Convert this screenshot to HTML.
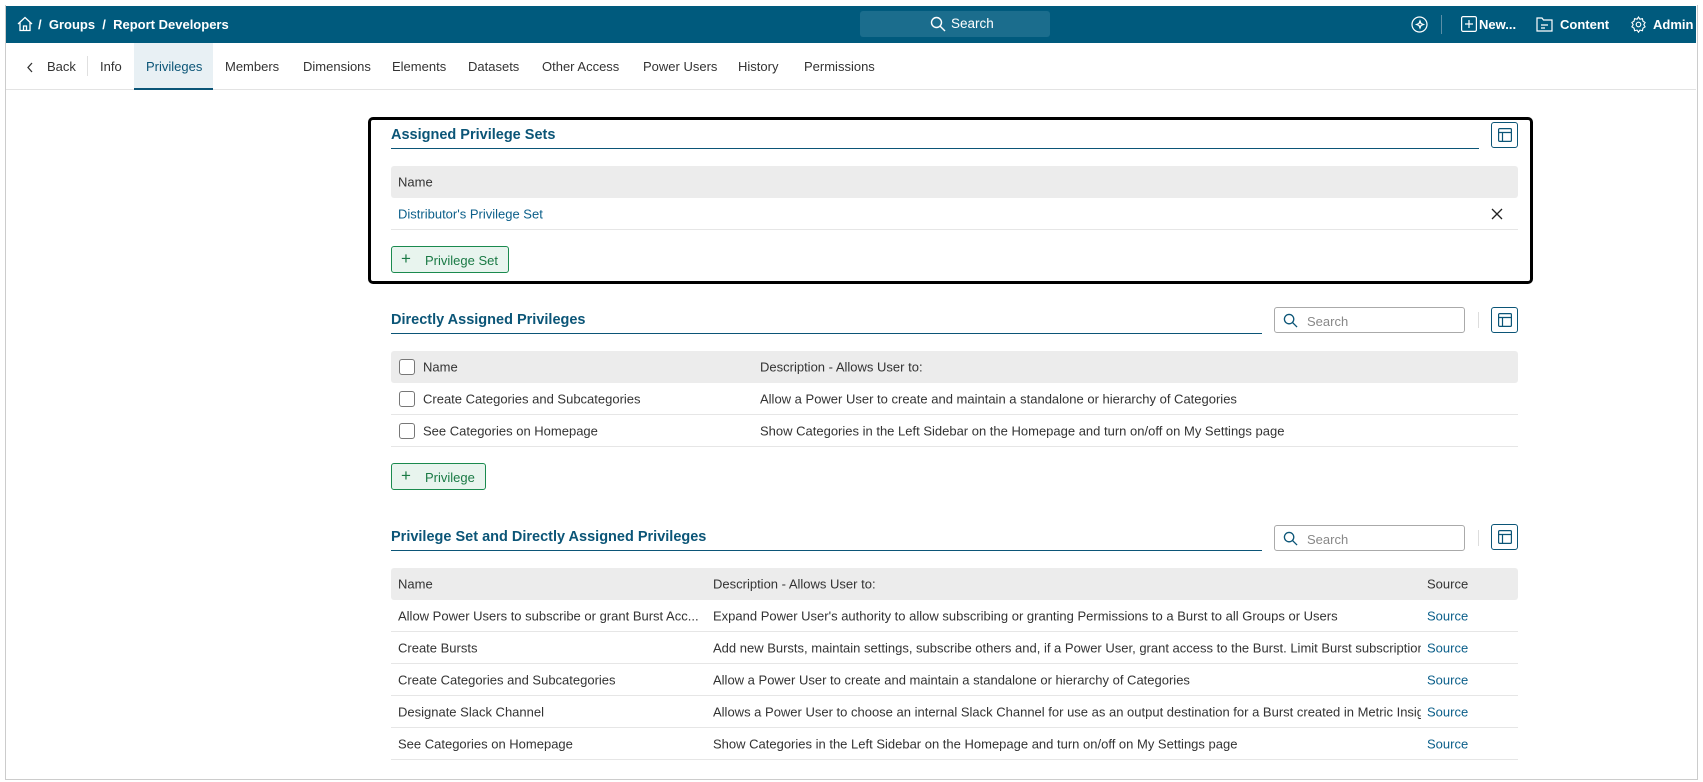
<!DOCTYPE html>
<html><head><meta charset="utf-8"><style>
*{box-sizing:border-box;margin:0;padding:0}
body{width:1703px;height:782px;background:#fff;font-family:"Liberation Sans",sans-serif;font-size:13px;color:#333;position:relative;overflow:hidden}
.frame{position:absolute;left:5px;top:5px;width:1693px;height:775px;border:1px solid #ccc;border-top:none}
.hdr{position:absolute;left:6px;top:6px;width:1690px;height:37px;background:#005a7d;color:#fff}
.a{position:absolute}
.hdr .t{position:absolute;top:11px;font-size:13px;font-weight:bold;white-space:nowrap}
.srch{position:absolute;left:854px;top:5px;width:190px;height:26px;background:#1b6d8d;border-radius:3px;font-size:13px}
.tabs{position:absolute;left:6px;top:43px;width:1690px;height:47px;border-bottom:1px solid #e3e3e3}
.tab{position:absolute;top:16px;font-size:13px;color:#333;white-space:nowrap}
.box{position:absolute;left:368px;top:117px;width:1165px;height:167px;border:3px solid #000;border-radius:5px}
.title{position:absolute;font-size:14.5px;font-weight:bold;color:#0b5577;white-space:nowrap}
.ul{position:absolute;height:1px;background:#0b5577}
.ib{position:absolute;width:27px;height:26px;border:1px solid #0b5577;border-radius:3px}
.th{position:absolute;left:391px;width:1127px;background:#ececec;border-radius:3px}
.row{position:absolute;left:391px;width:1127px;border-bottom:1px solid #e6e6e6}
.c{position:absolute;top:50%;transform:translateY(-50%);white-space:nowrap}
.btn{position:absolute;height:27px;border:1px solid #1a8a4e;background:#e8f4ee;border-radius:3px;color:#1a7a45;font-size:13px}
.sb{position:absolute;width:191px;height:26px;border:1px solid #aaa;border-radius:3px;color:#888;font-size:13px}
.cb{position:absolute;left:8px;top:50%;margin-top:-8px;width:16px;height:16px;border:1px solid #777;border-radius:3px;background:#fff}
.lnk{color:#0b5f8a}
</style></head><body>
<div class="frame"></div>
<div class="hdr">
 <svg class="a" style="left:11px;top:10px" width="16" height="16" viewBox="0 0 16 16" fill="none" stroke="#fff" stroke-width="1.3"><path d="M1 8 L8 1.5 L15 8 M3 6.5 V14.5 H13 V6.5 M6.5 14.5 V10 H9.5 V14.5"/></svg>
 <div class="t" style="left:32px">/&nbsp;&nbsp;Groups&nbsp;&nbsp;/&nbsp;&nbsp;Report Developers</div>
 <div class="srch"><svg class="a" style="left:70px;top:5px" width="16" height="16" viewBox="0 0 16 16" fill="none" stroke="#fff" stroke-width="1.4"><circle cx="6.5" cy="6.5" r="5"/><path d="M10.2 10.2 L15 15"/></svg><span class="a" style="left:91px;top:5px;font-size:13.5px">Search</span></div>
 <svg class="a" style="left:1405px;top:10px" width="17" height="17" viewBox="0 0 17 17" fill="none" stroke="#fff" stroke-width="1.2"><circle cx="8.5" cy="8.5" r="7.5"/><path d="M9 5 L10 7.5 L12.5 8.5 L10 9.5 L9 12 L8 9.5 L5.5 8.5 L8 7.5Z"/></svg>
 <div class="a" style="left:1435px;top:9px;width:1px;height:19px;background:#5b8ea6"></div>
 <svg class="a" style="left:1455px;top:10px" width="16" height="16" viewBox="0 0 16 16" fill="none" stroke="#fff" stroke-width="1.2"><rect x="0.6" y="0.6" width="14.8" height="14.8" rx="1.5"/><path d="M8 4 V12 M4 8 H12"/></svg>
 <div class="t" style="left:1473px">New...</div>
 <svg class="a" style="left:1530px;top:10px" width="17" height="16" viewBox="0 0 17 16" fill="none" stroke="#fff" stroke-width="1.2"><path d="M1 2 H6 L7.5 4 H16 V15 H1Z M5 9 H12 M5 12 H9"/></svg>
 <div class="t" style="left:1554px">Content</div>
 <svg class="a" style="left:1624px;top:10px" width="17" height="17" viewBox="0 0 24 24" fill="none" stroke="#fff" stroke-width="1.6"><circle cx="12" cy="12" r="3.2"/><path d="M12 1.5l2 3 3.5-.8.8 3.5 3 2-1.8 3 1.8 3-3 2-.8 3.5-3.5-.8-2 3-2-3-3.5.8-.8-3.5-3-2 1.8-3-1.8-3 3-2 .8-3.5 3.5.8z"/></svg>
 <div class="t" style="left:1647px">Admin</div>
</div>
<div class="tabs">
 <svg class="a" style="left:20px;top:19px" width="8" height="11" viewBox="0 0 8 11" fill="none" stroke="#333" stroke-width="1.3"><path d="M6 1 L2 5.5 L6 10"/></svg>
 <div class="tab" style="left:41px">Back</div>
 <div class="a" style="left:81px;top:13px;width:1px;height:20px;background:#e0e0e0"></div>
 <div class="tab" style="left:94px">Info</div>
 <div class="a" style="left:128px;top:0;width:79px;height:47px;background:#e8f0f4;border-bottom:2px solid #0b5577"></div>
 <div class="tab" style="left:140px;color:#0b5577">Privileges</div>
 <div class="tab" style="left:219px">Members</div>
 <div class="tab" style="left:297px">Dimensions</div>
 <div class="tab" style="left:386px">Elements</div>
 <div class="tab" style="left:462px">Datasets</div>
 <div class="tab" style="left:536px">Other Access</div>
 <div class="tab" style="left:637px">Power Users</div>
 <div class="tab" style="left:732px">History</div>
 <div class="tab" style="left:798px">Permissions</div>
</div>

<div class="box"></div>
<div class="title" style="left:391px;top:127px">Assigned Privilege Sets</div>
<div class="ul" style="left:391px;top:148px;width:1088px"></div>
<div class="ib" style="left:1491px;top:122px"><svg class="a" style="left:6px;top:5px" width="14" height="14" viewBox="0 0 14 14" fill="none" stroke="#0b5577" stroke-width="1.2"><rect x="0.6" y="0.6" width="12.8" height="12.8" rx="1"/><path d="M0.6 4.5 H13.4 M4.5 4.5 V13.4"/></svg></div>
<div class="th" style="top:166px;height:32px"><span class="c" style="left:7px">Name</span></div>
<div class="row" style="top:198px;height:32px"><span class="c lnk" style="left:7px">Distributor's Privilege Set</span><svg class="a" style="left:1100px;top:10px" width="12" height="12" viewBox="0 0 12 12" stroke="#222" stroke-width="1.3"><path d="M1 1 L11 11 M11 1 L1 11"/></svg></div>
<div class="btn" style="left:391px;top:246px;width:118px"><span class="a" style="left:9px;top:2px;font-size:17px;font-weight:300">+</span><span class="a" style="left:33px;top:6px">Privilege Set</span></div>

<div class="title" style="left:391px;top:312px">Directly Assigned Privileges</div>
<div class="ul" style="left:391px;top:333px;width:871px"></div>
<div class="sb" style="left:1274px;top:307px"><svg class="a" style="left:8px;top:5px" width="15" height="15" viewBox="0 0 16 16" fill="none" stroke="#0b5577" stroke-width="1.4"><circle cx="6.5" cy="6.5" r="5"/><path d="M10.2 10.2 L15 15"/></svg><span class="a" style="left:32px;top:6px">Search</span></div>
<div class="a" style="left:1478px;top:312px;width:1px;height:16px;background:#ddd"></div>
<div class="ib" style="left:1491px;top:307px"><svg class="a" style="left:6px;top:5px" width="14" height="14" viewBox="0 0 14 14" fill="none" stroke="#0b5577" stroke-width="1.2"><rect x="0.6" y="0.6" width="12.8" height="12.8" rx="1"/><path d="M0.6 4.5 H13.4 M4.5 4.5 V13.4"/></svg></div>
<div class="th" style="top:351px;height:32px"><div class="cb"></div><span class="c" style="left:32px">Name</span><span class="c" style="left:369px">Description - Allows User to:</span></div>
<div class="row" style="top:383px;height:32px"><div class="cb"></div><span class="c" style="left:32px">Create Categories and Subcategories</span><span class="c" style="left:369px">Allow a Power User to create and maintain a standalone or hierarchy of Categories</span></div>
<div class="row" style="top:415px;height:32px"><div class="cb"></div><span class="c" style="left:32px">See Categories on Homepage</span><span class="c" style="left:369px">Show Categories in the Left Sidebar on the Homepage and turn on/off on My Settings page</span></div>
<div class="btn" style="left:391px;top:463px;width:95px"><span class="a" style="left:9px;top:2px;font-size:17px;font-weight:300">+</span><span class="a" style="left:33px;top:6px">Privilege</span></div>

<div class="title" style="left:391px;top:529px">Privilege Set and Directly Assigned Privileges</div>
<div class="ul" style="left:391px;top:550px;width:871px"></div>
<div class="sb" style="left:1274px;top:525px"><svg class="a" style="left:8px;top:5px" width="15" height="15" viewBox="0 0 16 16" fill="none" stroke="#0b5577" stroke-width="1.4"><circle cx="6.5" cy="6.5" r="5"/><path d="M10.2 10.2 L15 15"/></svg><span class="a" style="left:32px;top:6px">Search</span></div>
<div class="a" style="left:1478px;top:530px;width:1px;height:16px;background:#ddd"></div>
<div class="ib" style="left:1491px;top:524px"><svg class="a" style="left:6px;top:5px" width="14" height="14" viewBox="0 0 14 14" fill="none" stroke="#0b5577" stroke-width="1.2"><rect x="0.6" y="0.6" width="12.8" height="12.8" rx="1"/><path d="M0.6 4.5 H13.4 M4.5 4.5 V13.4"/></svg></div>
<div class="th" style="top:568px;height:32px"><span class="c" style="left:7px">Name</span><span class="c" style="left:322px">Description - Allows User to:</span><span class="c" style="left:1036px">Source</span></div>
<div class="row" style="top:600px;height:32px"><span class="c" style="left:7px;width:308px;overflow:hidden">Allow Power Users to subscribe or grant Burst Acc...</span><span class="c" style="left:322px">Expand Power User's authority to allow subscribing or granting Permissions to a Burst to all Groups or Users</span><span class="c lnk" style="left:1036px">Source</span></div>
<div class="row" style="top:632px;height:32px"><span class="c" style="left:7px">Create Bursts</span><span class="c" style="left:322px;width:708px;overflow:hidden">Add new Bursts, maintain settings, subscribe others and, if a Power User, grant access to the Burst. Limit Burst subscriptions</span><span class="c lnk" style="left:1036px">Source</span></div>
<div class="row" style="top:664px;height:32px"><span class="c" style="left:7px">Create Categories and Subcategories</span><span class="c" style="left:322px">Allow a Power User to create and maintain a standalone or hierarchy of Categories</span><span class="c lnk" style="left:1036px">Source</span></div>
<div class="row" style="top:696px;height:32px"><span class="c" style="left:7px">Designate Slack Channel</span><span class="c" style="left:322px;width:708px;overflow:hidden">Allows a Power User to choose an internal Slack Channel for use as an output destination for a Burst created in Metric Insights</span><span class="c lnk" style="left:1036px">Source</span></div>
<div class="row" style="top:728px;height:32px"><span class="c" style="left:7px">See Categories on Homepage</span><span class="c" style="left:322px">Show Categories in the Left Sidebar on the Homepage and turn on/off on My Settings page</span><span class="c lnk" style="left:1036px">Source</span></div>
</body></html>
